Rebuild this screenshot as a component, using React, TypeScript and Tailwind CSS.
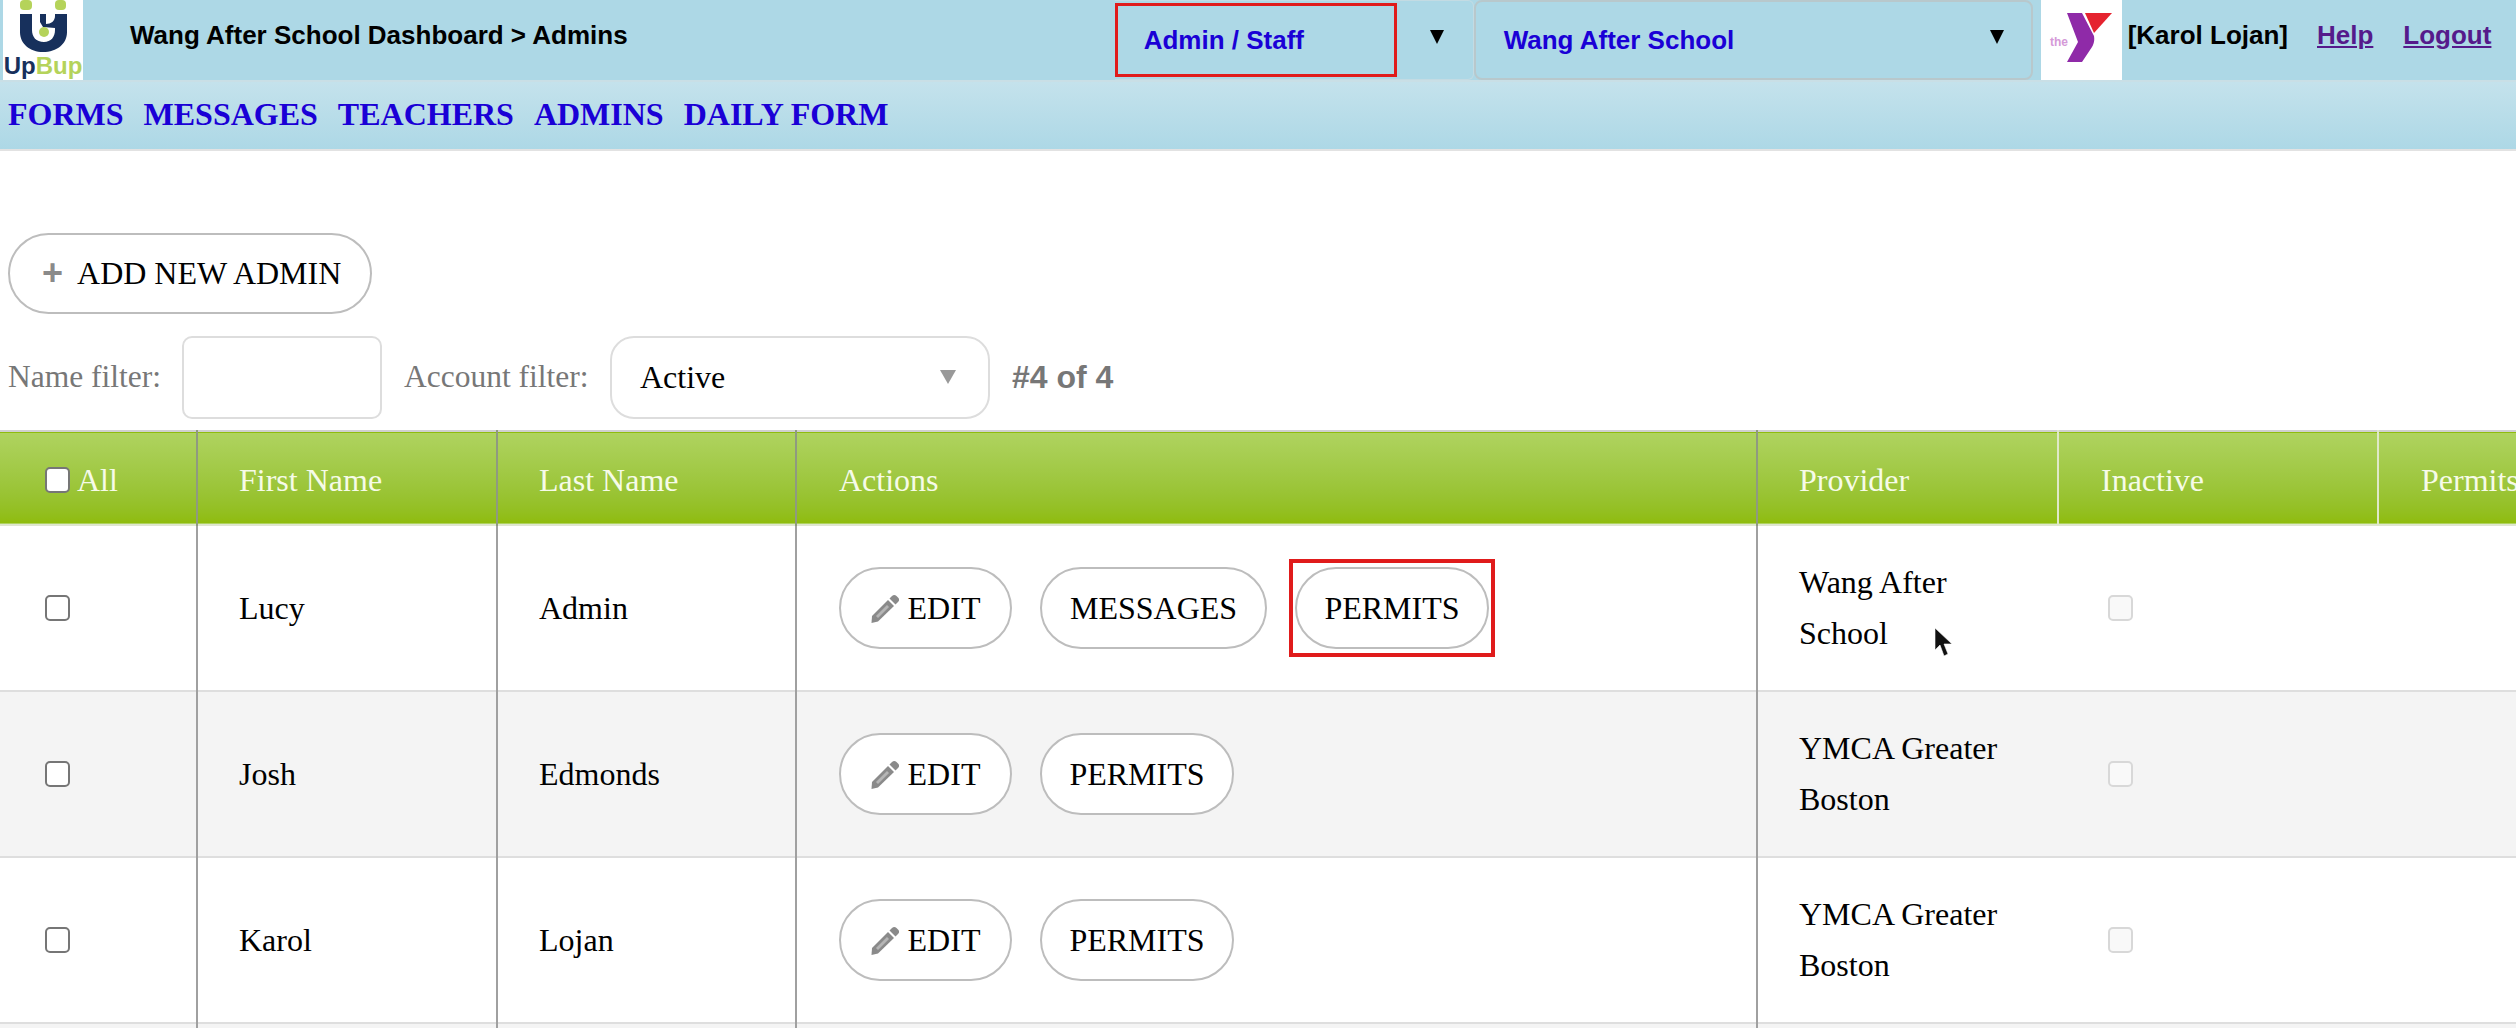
import React from "react";

const sans = "font-['Liberation_Sans',Arial,sans-serif]";

const rows = [
  { first: "Lucy", last: "Admin", provider: ["Wang After", "School"], messages: true },
  { first: "Josh", last: "Edmonds", provider: ["YMCA Greater", "Boston"], messages: false },
  { first: "Karol", last: "Lojan", provider: ["YMCA Greater", "Boston"], messages: false },
];

const navLinks = ["FORMS", "MESSAGES", "TEACHERS", "ADMINS", "DAILY FORM"];

const Caret = () => <span className="h-0 w-0 border-x-[7px] border-t-[14px] border-x-transparent border-t-black" />;

const UpBupLogo = () => (
  <div className="flex h-[80px] w-[80px] flex-col items-center bg-white">
    <svg viewBox="0 0 80 53" className="h-[53px] w-[80px] shrink-0">
      <rect x="17" y="0" width="12" height="10" rx="4" fill="#b5d35a" />
      <rect x="52" y="0" width="11" height="10" rx="4" fill="#b5d35a" />
      <path
        d="M17 14 H29 V30 C29 37 33 42 41 42 C48 42 52 37 52 30 V14 H64 V32 C64 44 54 52 40 52 C27 52 17 44 17 32 Z"
        fill="#17305c"
      />
      <path d="M37 14 H43 V24 C48 24 52 21 52 16 V28 L40 27 L37 22 Z" fill="#17305c" />
      <circle cx="41" cy="32" r="5" fill="#b5d35a" />
    </svg>
    <div className={`${sans} text-[24px] leading-[26px] font-bold whitespace-nowrap text-[#b5d35a]`}>
      <span className="text-[#17305c]">Up</span>Bup
    </div>
  </div>
);

const YmcaLogo = () => (
  <svg viewBox="0 0 81 80" className="h-[80px] w-[81px] bg-white">
    <path d="M26 13 H41 L53 36 C54 42 52 46 49 50 L41 62 H26 L37 42 Z" fill="#8f2aa8" />
    <path d="M44 13 H71 L53 33 Z" fill="#e5232f" />
    <text x="9" y="46" fontSize="12" fontWeight="700" fill="#d59ad8" fontFamily="Liberation Sans, sans-serif">
      the
    </text>
  </svg>
);

const Pencil = () => (
  <svg viewBox="0 0 28 29" className="h-[29px] w-[28px] shrink-0">
    <path d="M21 2 C22.5 0.5 24 0.5 25.5 2 L27 3.5 C28.5 5 28.5 6.5 27 8 L24.5 10.5 L18.5 4.5 Z" fill="#8a8a8a" />
    <path d="M17 6 L23 12 L7 27.5 L0.5 29 L1 22 Z" fill="#8a8a8a" />
    <path d="M16 11 L18 13 L7 24 L5 22 Z" fill="#b5b5b5" />
  </svg>
);

const Pill = ({ children, className = "" }: { children: React.ReactNode; className?: string }) => (
  <button
    className={`relative flex h-[82px] items-center rounded-[41px] border-2 border-[#bdbdbd] bg-white whitespace-nowrap ${className}`}
  >
    {children}
  </button>
);

const CheckBox = ({ disabled = false }: { disabled?: boolean }) => (
  <span
    className={`block h-[26px] w-[25px] rounded-[5px] border-2 ${
      disabled ? "border-[#d8d8d8] bg-[#f9f9f9]" : "border-[#767676] bg-white"
    }`}
  />
);

export default function App() {
  return (
    <div className="relative h-[1028px] w-[2516px] overflow-hidden bg-white font-['Liberation_Serif','Times_New_Roman',serif] text-[32px] text-black">
      <header className={`${sans} flex h-[80px] items-start bg-[#add8e6] pl-[3px] font-bold`}>
        <UpBupLogo />
        <div className="ml-[47px] pt-[17px] text-[26px] leading-[36px]">Wang After School Dashboard &gt; Admins</div>
        <div className="ml-[487px] flex h-[80px] w-[359px] shrink-0 items-center rounded-r-[6px] border-y border-r border-[#c3dbe3]">
          <div className="flex h-[74px] w-[282px] items-center border-[3px] border-[#e01b1b] pl-[26px] text-[26px] text-[#1a00d6]">
            Admin / Staff
          </div>
          <div className="mb-[6px] ml-[33px] flex">
            <Caret />
          </div>
        </div>
        <div className="flex h-[80px] w-[559px] shrink-0 items-center justify-between rounded-[8px] border-2 border-[#b8c8cc] pr-[27px] pl-[28px] text-[26px] text-[#1a00d6]">
          Wang After School
          <span className="mb-[6px] flex">
            <Caret />
          </span>
        </div>
        <div className="ml-[8px]">
          <YmcaLogo />
        </div>
        <div className="ml-[6px] pt-[17px] text-[26px] leading-[36px] whitespace-nowrap">[Karol Lojan]</div>
        <a className="ml-[29px] pt-[17px] text-[26px] leading-[36px] text-[#551a8b] underline">Help</a>
        <a className="ml-[30px] pt-[17px] text-[26px] leading-[36px] text-[#551a8b] underline">Logout</a>
      </header>

      <nav className="flex h-[71px] items-center gap-[20px] border-t-2 border-b-2 border-t-[#c9dfe6] border-b-[#e2e2e2] bg-gradient-to-b from-[#c4e2ec] to-[#add8e6] pb-[3px] pl-[8px] text-[32px] font-bold text-[#1a00d6]">
        {navLinks.map((link) => (
          <a key={link}>{link}</a>
        ))}
      </nav>

      <div className="pt-[82px] pl-[8px]">
        <button className="flex h-[81px] w-[364px] items-center rounded-[41px] border-2 border-[#bdbdbd] bg-white pb-[2px] pl-[32px]">
          <span className={`${sans} mr-[14px] text-[36px] leading-none font-bold text-[#8a8a8a]`}>+</span>
          ADD NEW ADMIN
        </button>
        <div className="mt-[22px] flex h-[83px] items-center text-[31.5px] text-[#777]">
          <span className="w-[174px] pb-[2px]">Name filter:</span>
          <input className="h-[83px] w-[200px] rounded-[10px] border-2 border-[#ddd] bg-white" />
          <span className="ml-[22px] w-[206px] pb-[2px]">Account filter:</span>
          <div className="flex h-[83px] w-[380px] items-center justify-between rounded-[24px] border-2 border-[#ddd] pr-[32px] pb-[2px] pl-[28px] text-[32px] text-black">
            Active
            <span className="h-0 w-0 border-x-[8px] border-t-[14px] border-x-transparent border-t-[#999]" />
          </div>
          <span className={`${sans} ml-[22px] pb-[2px] text-[32px] font-bold`}>#4 of 4</span>
        </div>
      </div>

      <table className="mt-[11px] w-[2700px] table-fixed border-collapse">
        <colgroup>
          <col className="w-[197px]" />
          <col className="w-[300px]" />
          <col className="w-[299px]" />
          <col className="w-[961px]" />
          <col className="w-[301px]" />
          <col className="w-[320px]" />
          <col className="w-[522px]" />
        </colgroup>
        <thead>
          <tr className="h-[94px] border-t-2 border-b-2 border-t-[#d0d0d0] border-b-[#dfe6cf] bg-gradient-to-b from-[#afd35f] to-[#8fbc0c] text-left text-[#f6fbe8]">
            <th className="border-r-2 border-r-[#8f9a80] pt-[3px] pl-[45px] font-normal">
              <span className="flex items-center gap-[7px]">
                <CheckBox />
                All
              </span>
            </th>
            <th className="border-r-2 border-r-[#8f9a80] pt-[3px] pl-[41px] font-normal">First Name</th>
            <th className="border-r-2 border-r-[#8f9a80] pt-[3px] pl-[41px] font-normal">Last Name</th>
            <th className="border-r-2 border-r-[#8f9a80] pt-[3px] pl-[42px] font-normal">Actions</th>
            <th className="border-r-2 border-r-[#dfe8c8] pt-[3px] pl-[41px] font-normal">Provider</th>
            <th className="border-r-2 border-r-[#dfe8c8] pt-[3px] pl-[42px] font-normal">Inactive</th>
            <th className="pt-[3px] pl-[42px] font-normal">Permits</th>
          </tr>
        </thead>
        <tbody>
          {rows.map((row, i) => (
            <tr key={row.first} className={`h-[166px] border-b-2 border-b-[#dedede] ${i === 1 ? "bg-[#f4f4f4]" : "bg-white"}`}>
              <td className="border-r-2 border-r-[#a0a0a0] pl-[45px]">
                <CheckBox />
              </td>
              <td className="border-r-2 border-r-[#a0a0a0] pl-[41px]">{row.first}</td>
              <td className="border-r-2 border-r-[#a0a0a0] pl-[41px]">{row.last}</td>
              <td className="border-r-2 border-r-[#a0a0a0] pl-[42px]">
                <div className="flex items-center gap-[28px]">
                  <Pill className="w-[173px] justify-center gap-[9px]">
                    <Pencil />
                    EDIT
                  </Pill>
                  {row.messages && <Pill className="w-[227px] justify-center">MESSAGES</Pill>}
                  <Pill className="w-[194px] justify-center">
                    PERMITS
                    {i === 0 && <span className="absolute -inset-x-[8px] -inset-y-[10px] border-[4px] border-[#e01b1b]" />}
                  </Pill>
                </div>
              </td>
              <td className="pl-[41px] leading-[51px]">
                {row.provider.map((line) => (
                  <div key={line}>{line}</div>
                ))}
              </td>
              <td className="pl-[50px]">
                <CheckBox disabled />
              </td>
              <td />
            </tr>
          ))}
          <tr className="h-[60px] bg-[#f4f4f4]">
            <td className="border-r-2 border-r-[#a0a0a0]" />
            <td className="border-r-2 border-r-[#a0a0a0]" />
            <td className="border-r-2 border-r-[#a0a0a0]" />
            <td className="border-r-2 border-r-[#a0a0a0]" />
            <td />
            <td />
            <td />
          </tr>
        </tbody>
      </table>

      {/* mouse pointer caught in the screenshot */}
      <svg viewBox="0 0 20 30" className="absolute top-[628px] left-[1934px] h-[30px] w-[20px]">
        <path d="M1 0 L1 22 L6 17 L10 28 L14 26 L10 16 L18 16 Z" fill="#111" stroke="#fff" strokeWidth="0.6" />
      </svg>
    </div>
  );
}
